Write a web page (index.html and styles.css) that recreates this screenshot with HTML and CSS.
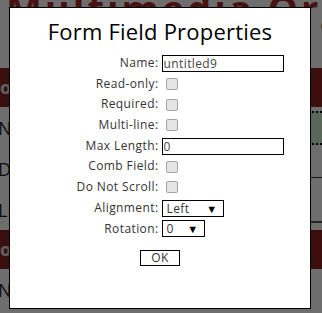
FILE: index.html
```html
<!DOCTYPE html>
<html lang="en">
<head>
    <meta charset="UTF-8">
    <meta name="viewport" content="width=device-width, initial-scale=1.0">
    <title>Form Field Properties</title>
    <link rel="stylesheet" href="styles.css">
</head>
<body>
    <div class="page">
        <div class="page-header">
            <div class="menu-icon"><span></span><span></span><span></span><span></span></div>
            <h1 class="page-title">Multimedia Organizer</h1>
        </div>
        <div class="band">Form Details</div>
        <div class="page-rows">
            <div class="page-row"><span>Name</span><div class="green-field"></div></div>
            <div class="page-row"><span>Date</span><div class="rule"></div></div>
            <div class="page-row"><span>Luogo</span><div class="rule double"></div></div>
        </div>
        <div class="band">Form Notes</div>
        <div class="page-rows">
            <div class="page-row"><span>Name</span></div>
        </div>
    </div>

    <div class="overlay"></div>

    <div class="dialog">
        <h2 class="dialog-title">Form Field Properties</h2>
        <div class="fields">
            <label class="field-label">Name:</label>
            <div class="field-control"><input class="text-input" type="text" value="untitled9"></div>

            <label class="field-label">Read-only:</label>
            <div class="field-control"><input class="check" type="checkbox"></div>

            <label class="field-label">Required:</label>
            <div class="field-control"><input class="check" type="checkbox"></div>

            <label class="field-label">Multi-line:</label>
            <div class="field-control"><input class="check" type="checkbox"></div>

            <label class="field-label">Max Length:</label>
            <div class="field-control"><input class="text-input" type="text" value="0"></div>

            <label class="field-label">Comb Field:</label>
            <div class="field-control"><input class="check" type="checkbox"></div>

            <label class="field-label">Do Not Scroll:</label>
            <div class="field-control"><input class="check" type="checkbox"></div>

            <label class="field-label">Alignment:</label>
            <div class="field-control"><div class="select select-wide"><span>Left</span><span class="arrow">&#9660;</span></div></div>

            <label class="field-label">Rotation:</label>
            <div class="field-control"><div class="select select-narrow"><span>0</span><span class="arrow">&#9660;</span></div></div>
        </div>
        <div class="actions">
            <button class="ok-button">OK</button>
        </div>
    </div>
</body>
</html>
```

FILE: styles.css
```css
body {
    margin: 0;
    font-family: "Open Sans", sans-serif;
    width: 322px;
    height: 313px;
    overflow: hidden;
}
.page {
    background-color: #fff;
    height: 313px;
}
.page-header {
    height: 68px;
    display: flex;
    align-items: flex-start;
    overflow: hidden;
}
.menu-icon {
    width: 12px;
    padding-top: 1px;
    display: flex;
    flex-direction: column;
    gap: 7px;
}
.menu-icon span {
    display: block;
    height: 3px;
    background-color: #8b2323;
}
.page-title {
    margin: -18px 0 0 6px;
    font-size: 38px;
    font-weight: bold;
    color: #a52a2a;
    white-space: nowrap;
    letter-spacing: 3px;
}
.band {
    height: 39px;
    background-color: #8b2323;
    color: #ddd;
    font-size: 18px;
    font-weight: bold;
    line-height: 39px;
    margin-left: -10px;
}
.page-rows {
    display: flex;
    flex-direction: column;
}
.page-row {
    height: 41px;
    display: flex;
    align-items: center;
    justify-content: space-between;
    font-size: 18px;
    color: #222;
}
.page-row span {
    margin-left: -2px;
}
.green-field {
    width: 30px;
    height: 30px;
    background-color: #d3ecd3;
    border-top: 2px dotted #000;
    border-bottom: 2px dotted #000;
}
.rule {
    width: 30px;
    height: 1px;
    margin-top: 18px;
    background-color: #333;
}
.rule.double {
    height: 2px;
    margin-top: 24px;
    background-color: #555;
}
.overlay {
    position: fixed;
    top: 0;
    left: 0;
    right: 0;
    bottom: 0;
    background-color: rgba(0, 0, 0, 0.57);
}
.dialog {
    position: fixed;
    left: 9px;
    top: 7px;
    width: 300px;
    height: 300px;
    background-color: #fff;
    border: 1px solid #000;
}
.dialog-title {
    margin: 9px 0 0;
    text-align: center;
    font-size: 22px;
    font-weight: 500;
    color: #000;
    line-height: 28px;
    letter-spacing: 0.2px;
}
.fields {
    display: grid;
    grid-template-columns: 1fr 1fr;
    grid-auto-rows: 20.7px;
    column-gap: 3px;
    margin-top: 8px;
}
.field-label {
    text-align: right;
    font-size: 12px;
    letter-spacing: 0.4px;
    color: #333;
    line-height: 20.7px;
}
.field-control {
    display: flex;
    align-items: center;
}
.text-input {
    width: 122px;
    height: 17px;
    box-sizing: border-box;
    border: 1px solid #000;
    padding: 0 1px;
    margin: 0;
    font-family: "Open Sans", sans-serif;
    font-size: 12px;
    letter-spacing: 0.4px;
    color: #444;
    outline: none;
}
.check {
    appearance: none;
    width: 12px;
    height: 12px;
    margin: 0 0 0 4px;
    background-color: #e4e4e4;
    border: 1px solid #a6a6a6;
    border-radius: 2px;
}
.select {
    height: 17px;
    box-sizing: border-box;
    border: 1px solid #000;
    display: flex;
    align-items: center;
    justify-content: space-between;
    padding: 0 5px 0 4px;
    font-size: 12px;
    letter-spacing: 0.4px;
    color: #333;
}
.select-wide {
    width: 62px;
}
.select-narrow {
    width: 43px;
}
.arrow {
    font-size: 11px;
    color: #000;
}
.actions {
    text-align: center;
    margin-top: 6px;
}
.ok-button {
    width: 40px;
    height: 16px;
    padding: 0;
    background-color: #fff;
    border: 1px solid #000;
    font-family: "Open Sans", sans-serif;
    font-size: 12px;
    letter-spacing: 0.4px;
    color: #333;
    line-height: 14px;
}
```
